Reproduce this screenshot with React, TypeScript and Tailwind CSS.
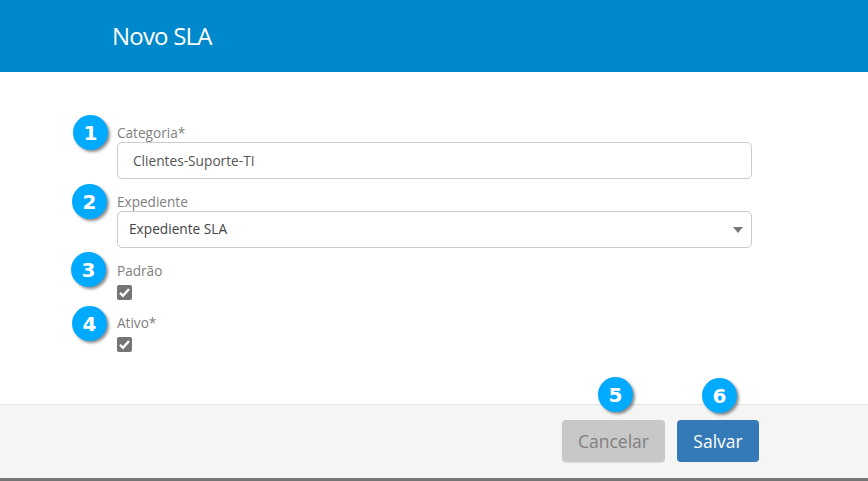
function Badge({ n, className }: { n: number; className: string }) {
  return (
    <div
      className={`absolute flex h-[35px] w-[35px] items-center justify-center rounded-full bg-[#00aaff] font-['DejaVu_Sans',sans-serif] text-[20px] font-bold text-white shadow-[2px_2px_3px_rgba(0,0,0,0.45)] ${className}`}
    >
      {n}
    </div>
  );
}

function Check() {
  return (
    <div className="flex h-[15px] w-[15px] items-center justify-center rounded-[2px] bg-[#757575]">
      <svg width="13" height="13" viewBox="0 0 13 13" fill="none">
        <path d="M2 6.8 5 9.8 11 3" stroke="white" strokeWidth="2.4" />
      </svg>
    </div>
  );
}

export default function App() {
  return (
    <div className="relative flex h-[481px] w-[868px] flex-col overflow-hidden bg-white font-['Open_Sans',sans-serif]">
      <div className="flex h-[72px] items-center bg-[#0088cc] pl-[112px]">
        <h1 className="text-[24px] tracking-[-0.8px] text-white">Novo SLA</h1>
      </div>

      <div className="flex h-[332px] flex-col pl-[117px] pt-[51px]">
        <label className="h-[19px] text-[13.6px] leading-[19px] text-[#808080]">Categoria*</label>
        <input
          readOnly
          value="Clientes-Suporte-TI"
          className="h-[37px] w-[635px] rounded-[5px] border border-[#cccccc] pl-[15px] text-[13.7px] text-[#555555] outline-none"
        />
        <label className="mt-[13px] h-[19px] text-[13.6px] leading-[19px] text-[#808080]">Expediente</label>
        <div className="flex h-[37px] w-[635px] items-center justify-between rounded-[5px] border border-[#cccccc] pl-[11px] pr-[8px] text-[13.7px] text-[#444444]">
          <span>Expediente SLA</span>
          <div className="h-0 w-0 border-x-[5px] border-t-[6px] border-x-transparent border-t-[#777777]" />
        </div>
        <label className="mt-[13px] h-[19px] text-[13.6px] leading-[19px] text-[#808080]">Padrão</label>
        <div className="mt-[5px]">
          <Check />
        </div>
        <label className="mt-[13px] h-[19px] text-[13.6px] leading-[19px] text-[#808080]">Ativo*</label>
        <div className="mt-[5px]">
          <Check />
        </div>
      </div>

      <div className="flex h-[74px] justify-end gap-[12px] border-t border-[#e5e5e5] bg-[#f5f5f5] pr-[109px] pt-[15px]">
        <button className="h-[42px] w-[103px] rounded-[4px] bg-[#c8c8c8] text-[17.5px] font-medium text-[#7f7f7f] shadow-[0_1px_1px_rgba(0,0,0,0.1)]">
          Cancelar
        </button>
        <button className="h-[42px] w-[82px] rounded-[4px] bg-[#337ab7] text-[17.5px] font-medium text-white">
          Salvar
        </button>
      </div>
      <div className="h-[3px] bg-[#757575]" />

      <Badge n={1} className="left-[73px] top-[115px]" />
      <Badge n={2} className="left-[72px] top-[184px]" />
      <Badge n={3} className="left-[71px] top-[252px]" />
      <Badge n={4} className="left-[72px] top-[306px]" />
      <Badge n={5} className="left-[598px] top-[377px]" />
      <Badge n={6} className="left-[702px] top-[378px]" />
    </div>
  );
}
